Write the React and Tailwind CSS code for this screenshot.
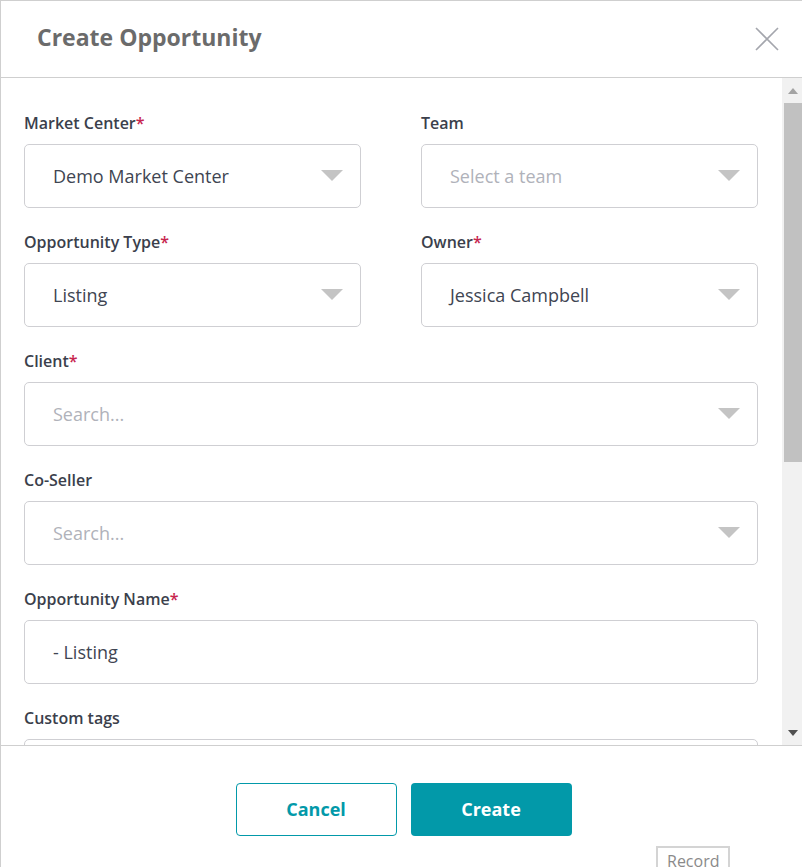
import React from "react";

const font = "font-['Open_Sans',Lato,sans-serif]";

function Caret() {
  return (
    <svg width="22" height="12" viewBox="0 0 22 12" className="shrink-0">
      <path d="M0 0 L22 0 L11 11 Z" fill="#c4c4c4" />
    </svg>
  );
}

function Label({ text, required }) {
  return (
    <div className="text-[16px] leading-[21px] font-semibold text-[#3b3f4c] mb-[10px]">
      {text}
      {required && <span className="text-[#c7254e]">*</span>}
    </div>
  );
}

function Select({ value, placeholder, caret = true }) {
  return (
    <div className="h-[64px] rounded-[5px] border border-[#cfcfd3] flex items-center pl-[28px] pr-[17px]">
      <span
        className={
          "flex-1 text-[18px] " + (value ? "text-[#404552]" : "text-[#b0b2ba]")
        }
      >
        {value || placeholder}
      </span>
      {caret && <Caret />}
    </div>
  );
}

function Field({ label, required, value, placeholder, caret }) {
  return (
    <div className="flex flex-col">
      <Label text={label} required={required} />
      <Select value={value} placeholder={placeholder} caret={caret} />
    </div>
  );
}

function Scrollbar() {
  return (
    <div className="w-[20px] bg-[#f1f1f1] flex flex-col items-end">
      <div className="h-[25px] w-full flex items-center justify-center pl-[2px]">
        <svg width="10" height="6" viewBox="0 0 10 6">
          <path d="M0 6 L5 0 L10 6 Z" fill="#a3a3a3" />
        </svg>
      </div>
      <div className="h-[359px] w-[18px] bg-[#c1c1c1]" />
      <div className="flex-1" />
      <div className="h-[24px] w-full flex items-center justify-center pl-[2px]">
        <svg width="10" height="6" viewBox="0 0 10 6">
          <path d="M0 0 L10 0 L5 6 Z" fill="#505050" />
        </svg>
      </div>
    </div>
  );
}

export default function App() {
  return (
    <div className={"w-[802px] h-[867px] overflow-hidden bg-white " + font}>
      <div className="h-full border-l border-t border-[#cfcfcf] flex flex-col">
        <div className="h-[77px] shrink-0 border-b border-[#cfcfcf] flex items-center justify-between pl-[36px] pr-[23px] pb-[3px]">
          <h1 className="text-[23px] font-bold text-[#6b6b6b]">
            Create Opportunity
          </h1>
          <svg width="24" height="24" viewBox="0 0 24 24" className="mt-[2px]">
            <path
              d="M1 1 L23 23 M23 1 L1 23"
              stroke="#a4a6ad"
              strokeWidth="1.6"
              fill="none"
            />
          </svg>
        </div>

        <div className="h-[667px] shrink-0 flex">
          <div className="flex-1 overflow-hidden pt-[35px] pl-[23px] pr-[24px] flex flex-col gap-[24px]">
            <div className="grid grid-cols-2 gap-x-[60px]">
              <Field label="Market Center" required value="Demo Market Center" />
              <Field label="Team" placeholder="Select a team" />
            </div>
            <div className="grid grid-cols-2 gap-x-[60px]">
              <Field label="Opportunity Type" required value="Listing" />
              <Field label="Owner" required value="Jessica Campbell" />
            </div>
            <Field label="Client" required placeholder="Search..." />
            <Field label="Co-Seller" placeholder="Search..." />
            <Field
              label="Opportunity Name"
              required
              value=" - Listing"
              caret={false}
            />
            <Field label="Custom tags" placeholder="" caret={false} />
          </div>
          <Scrollbar />
        </div>

        <div className="flex-1 border-t border-[#cfcfcf] flex flex-col">
          <div className="flex justify-center gap-[14px] pt-[37px] pl-[4px]">
            <button className="w-[161px] h-[53px] rounded-[4px] border border-[#0299a9] bg-white text-[#0299a9] text-[18px] font-bold">
              Cancel
            </button>
            <button className="w-[161px] h-[53px] rounded-[4px] bg-[#0299a9] text-white text-[18px] font-bold">
              Create
            </button>
          </div>
          <div className="flex justify-end pr-[72px] pt-[10px]">
            <div className="w-[74px] h-[30px] border-2 border-[#d4d4d4] pl-[9px] pt-[3px] text-[16px] leading-[20px] text-[#8a8a8a]">
              Record
            </div>
          </div>
        </div>
      </div>
    </div>
  );
}
